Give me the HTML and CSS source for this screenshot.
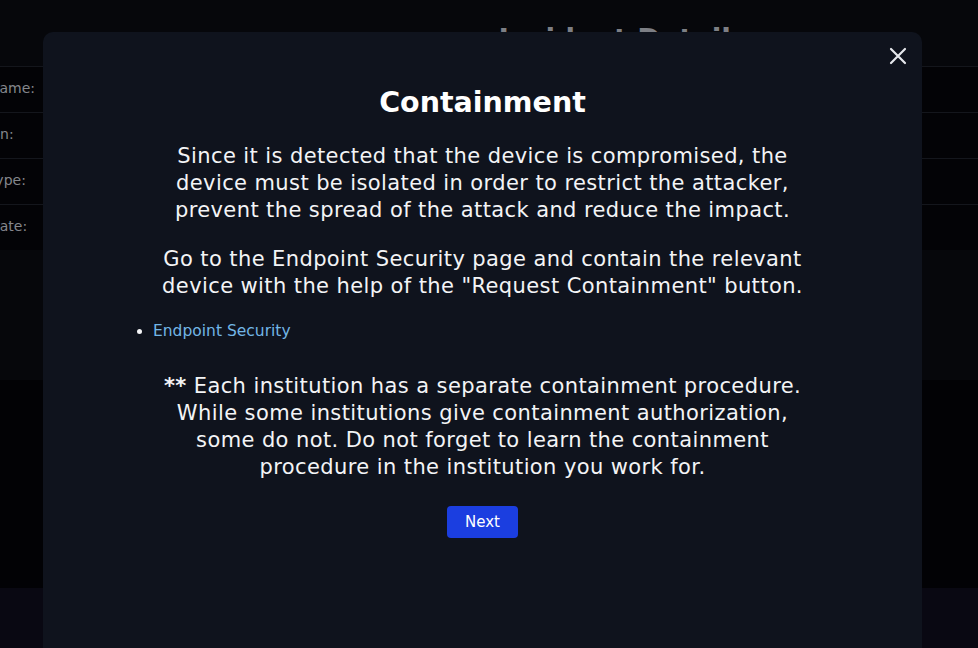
FILE: index.html
```html
<!DOCTYPE html>
<html>
<head>
<meta charset="utf-8">
<link rel="stylesheet" href="styles.css">
</head>
<body>
<div class="page">
  <header class="page-header">
    <h1 class="page-title">Incident Details</h1>
  </header>
  <section class="details">
    <div class="row"><span class="label">Name:</span></div>
    <div class="row"><span class="label">On:</span></div>
    <div class="row"><span class="label">Type:</span></div>
    <div class="row"><span class="label">Date:</span></div>
  </section>
  <section class="band-a"></section>
  <section class="band-b"></section>
  <section class="band-c"></section>
</div>

<div class="modal">
  <button class="close" aria-label="Close">
    <svg width="18" height="18" viewBox="0 0 18 18"><path d="M2 2L16 16M16 2L2 16" stroke="#e5e7eb" stroke-width="2.2" stroke-linecap="round"/></svg>
  </button>
  <h2 class="modal-title">Containment</h2>
  <p class="text p1">Since it is detected that the device is compromised, the<br>device must be isolated in order to restrict the attacker,<br>prevent the spread of the attack and reduce the impact.</p>
  <p class="text p2">Go to the Endpoint Security page and contain the relevant<br>device with the help of the "Request Containment" button.</p>
  <ul class="links">
    <li><a href="#">Endpoint Security</a></li>
  </ul>
  <p class="text p3"><b>**</b> Each institution has a separate containment procedure.<br>While some institutions give containment authorization,<br>some do not. Do not forget to learn the containment<br>procedure in the institution you work for.</p>
  <div class="actions"><button class="next">Next</button></div>
</div>
</body>
</html>
```

FILE: styles.css
```css
html, body {
  margin: 0;
  padding: 0;
  background: #06070b;
  font-family: "DejaVu Sans", "Open Sans", sans-serif;
  overflow: hidden;
}
.page {
  display: flex;
  flex-direction: column;
  height: 648px;
}
.page-header {
  height: 66px;
  display: flex;
  justify-content: center;
  padding-left: 268px;
  box-sizing: border-box;
}
.page-title {
  margin: 23px 0 0;
  font-size: 28px;
  font-weight: 600;
  color: #7d7f85;
}
.details {
  background: #030306;
}
.row {
  height: 46px;
  box-sizing: border-box;
  border-top: 1px solid #14161c;
  display: flex;
  align-items: center;
  padding-bottom: 3px;
}
.label {
  margin-left: -11px;
  font-size: 14px;
  color: #85878c;
}
.band-a {
  height: 130px;
  background: #06070b;
}
.band-b {
  height: 208px;
  background: #020205;
}
.band-c {
  flex: 1;
  background: #090812;
}
.modal {
  position: absolute;
  left: 43px;
  top: 32px;
  width: 879px;
  height: 616px;
  background: #0f131d;
  border-radius: 10px 10px 0 0;
  box-sizing: border-box;
  padding-top: 54px;
  display: flex;
  flex-direction: column;
  align-items: center;
  color: #f3f4f6;
}
.close {
  position: absolute;
  top: 15px;
  right: 15px;
  background: none;
  border: 0;
  padding: 0;
  width: 18px;
  height: 18px;
  cursor: pointer;
}
.modal-title {
  margin: 0;
  font-size: 28.5px;
  line-height: 34px;
  font-weight: 600;
  color: #ffffff;
}
.text {
  margin: 0;
  font-size: 21px;
  letter-spacing: 0.4px;
  line-height: 27px;
  text-align: center;
}
.p1 { margin-top: 23px; }
.p2 { margin-top: 22px; }
.links {
  align-self: stretch;
  margin: 20px 0 0 110px;
  padding: 0;
  list-style: disc;
  color: #f3f4f6;
  font-size: 15.5px;
  line-height: 22px;
}
.links a {
  color: #72b6e6;
  text-decoration: none;
}
.p3 { margin-top: 31px; }
.p3 b { font-weight: 700; }
.actions {
  margin-top: 25px;
}
.next {
  width: 71px;
  height: 32px;
  border: 0;
  border-radius: 4px;
  background: #1b3ee0;
  color: #ffffff;
  font-family: inherit;
  font-size: 15px;
  cursor: pointer;
}
```
